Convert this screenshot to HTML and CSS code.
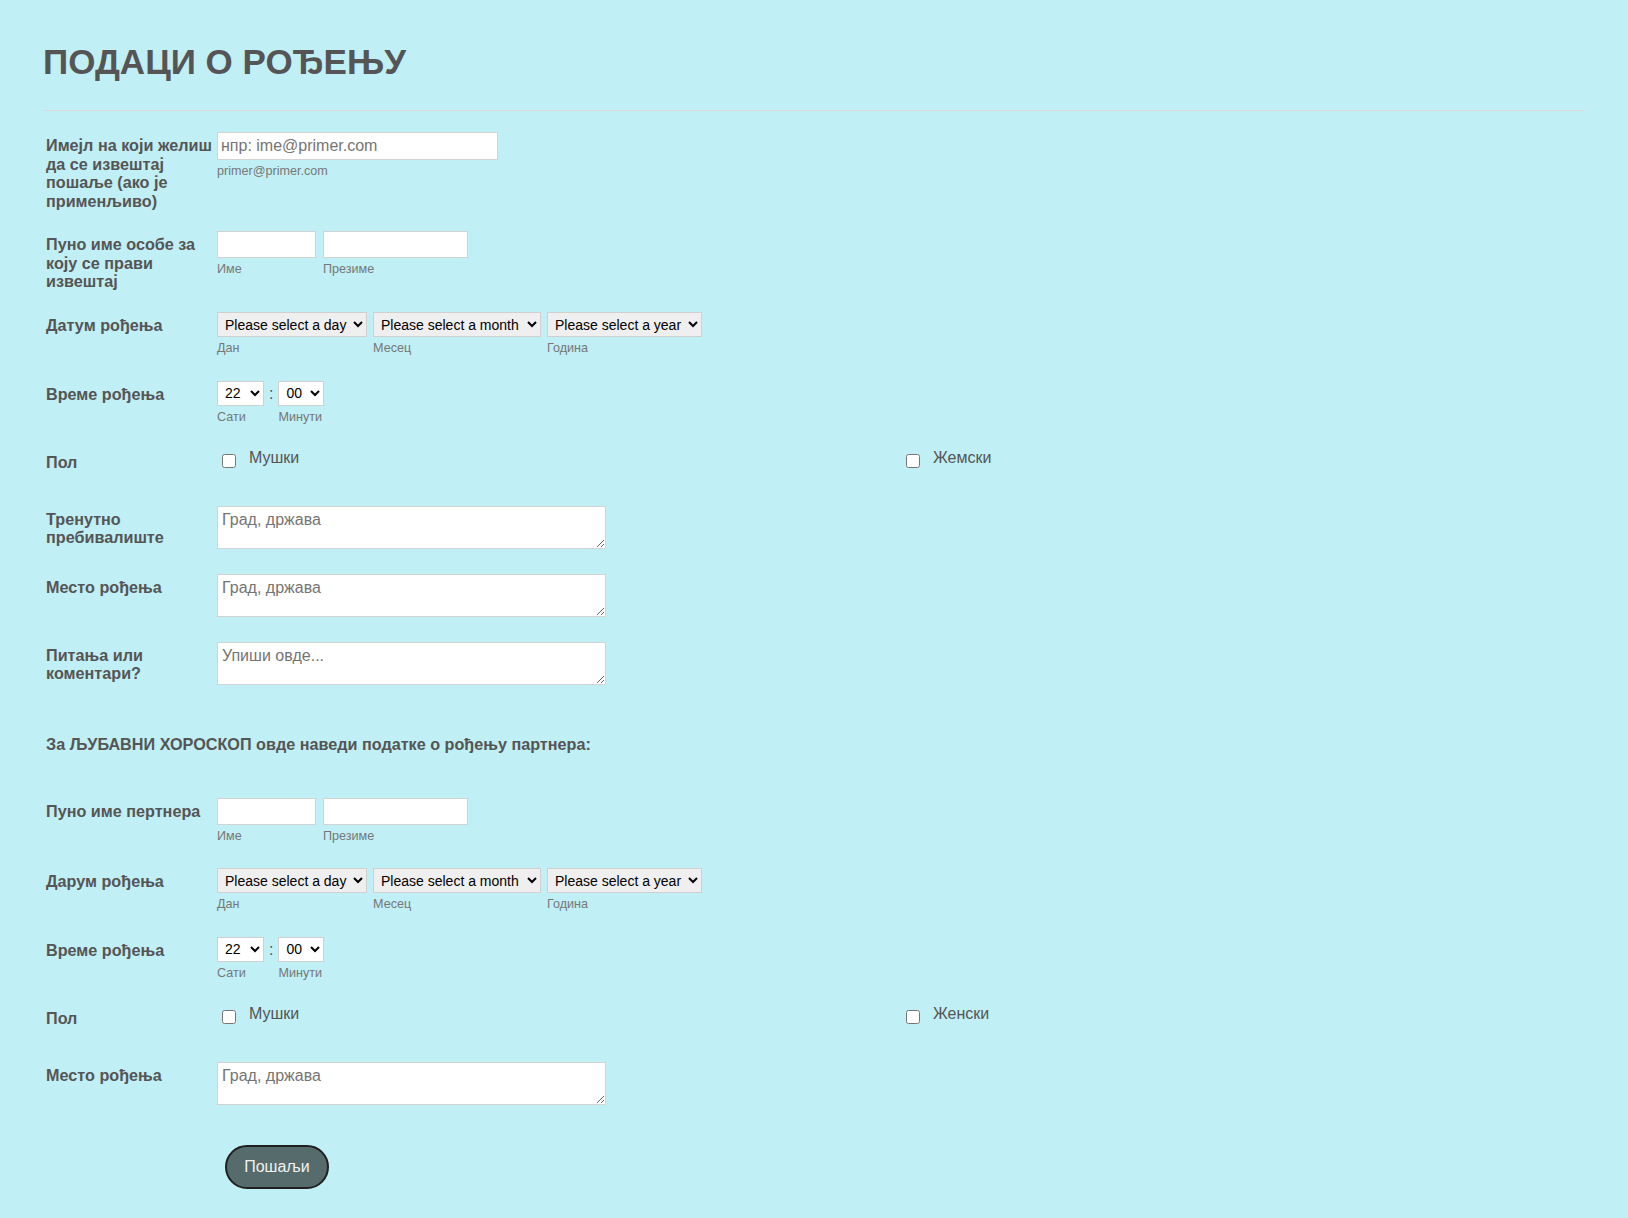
FILE: index.html
```html
<!DOCTYPE html>
<html lang="sr">
<head>
    <meta charset="utf-8">
    <title>Подаци о рођењу</title>
    <link rel="stylesheet" href="styles.css">
</head>
<body>
<form class="form-all" action="#" method="post">
    <h1 class="form-header">ПОДАЦИ О РОЂЕЊУ</h1>
    <hr class="form-divider">

    <ul class="form-section">
        <li class="form-line">
            <label class="form-label" for="email">Имејл на који желиш да се извештај пошаље (ако је применљиво)</label>
            <div class="form-input">
                <span class="form-sub">
                    <input class="field field-email" id="email" type="email" placeholder="нпр: ime@primer.com">
                    <span class="sublabel">primer@primer.com</span>
                </span>
            </div>
        </li>

        <li class="form-line">
            <label class="form-label" for="first">Пуно име особе за коју се прави извештај</label>
            <div class="form-input group group-name">
                <span class="form-sub">
                    <input class="field field-first" id="first" type="text">
                    <span class="sublabel">Име</span>
                </span>
                <span class="form-sub">
                    <input class="field field-last" id="last" type="text">
                    <span class="sublabel">Презиме</span>
                </span>
            </div>
        </li>

        <li class="form-line">
            <label class="form-label" for="day">Датум рођења</label>
            <div class="form-input group group-date">
                <span class="form-sub">
                    <select class="dropdown sel-day" id="day">
                        <option>Please select a day</option>
                        <option>1</option><option>2</option><option>3</option>
                    </select>
                    <span class="sublabel">Дан</span>
                </span>
                <span class="form-sub">
                    <select class="dropdown sel-month">
                        <option>Please select a month</option>
                        <option>Јануар</option><option>Фебруар</option><option>Март</option>
                    </select>
                    <span class="sublabel">Месец</span>
                </span>
                <span class="form-sub">
                    <select class="dropdown sel-year">
                        <option>Please select a year</option>
                        <option>2000</option><option>1999</option><option>1998</option>
                    </select>
                    <span class="sublabel">Година</span>
                </span>
            </div>
        </li>

        <li class="form-line">
            <label class="form-label" for="hour">Време рођења</label>
            <div class="form-input group group-time">
                <span class="form-sub">
                    <select class="dropdown time sel-hour" id="hour">
                        <option>20</option><option>21</option><option selected>22</option><option>23</option>
                    </select>
                    <span class="sublabel">Сати</span>
                </span>
                <span class="colon">:</span>
                <span class="form-sub">
                    <select class="dropdown time sel-min">
                        <option selected>00</option><option>15</option><option>30</option><option>45</option>
                    </select>
                    <span class="sublabel">Минути</span>
                </span>
            </div>
        </li>

        <li class="form-line">
            <label class="form-label">Пол</label>
            <div class="form-input options">
                <label class="option"><input type="checkbox" name="pol" value="m"><span>Мушки</span></label>
                <label class="option"><input type="checkbox" name="pol" value="z"><span>Жемски</span></label>
            </div>
        </li>

        <li class="form-line">
            <label class="form-label" for="home">Тренутно пребивалиште</label>
            <div class="form-input">
                <textarea class="field area" id="home" placeholder="Град, држава"></textarea>
            </div>
        </li>

        <li class="form-line">
            <label class="form-label" for="place">Место рођења</label>
            <div class="form-input">
                <textarea class="field area" id="place" placeholder="Град, држава"></textarea>
            </div>
        </li>

        <li class="form-line">
            <label class="form-label" for="notes">Питања или коментари?</label>
            <div class="form-input">
                <textarea class="field area" id="notes" placeholder="Упиши овде..."></textarea>
            </div>
        </li>

        <li class="form-line form-text">
            За ЉУБАВНИ ХОРОСКОП овде наведи податке о рођењу партнера:
        </li>

        <li class="form-line">
            <label class="form-label" for="p-first">Пуно име пертнера</label>
            <div class="form-input group group-name">
                <span class="form-sub">
                    <input class="field field-first" id="p-first" type="text">
                    <span class="sublabel">Име</span>
                </span>
                <span class="form-sub">
                    <input class="field field-last" type="text">
                    <span class="sublabel">Презиме</span>
                </span>
            </div>
        </li>

        <li class="form-line">
            <label class="form-label" for="p-day">Дарум рођења</label>
            <div class="form-input group group-date">
                <span class="form-sub">
                    <select class="dropdown sel-day" id="p-day">
                        <option>Please select a day</option>
                        <option>1</option><option>2</option><option>3</option>
                    </select>
                    <span class="sublabel">Дан</span>
                </span>
                <span class="form-sub">
                    <select class="dropdown sel-month">
                        <option>Please select a month</option>
                        <option>Јануар</option><option>Фебруар</option><option>Март</option>
                    </select>
                    <span class="sublabel">Месец</span>
                </span>
                <span class="form-sub">
                    <select class="dropdown sel-year">
                        <option>Please select a year</option>
                        <option>2000</option><option>1999</option><option>1998</option>
                    </select>
                    <span class="sublabel">Година</span>
                </span>
            </div>
        </li>

        <li class="form-line">
            <label class="form-label" for="p-hour">Време рођења</label>
            <div class="form-input group group-time">
                <span class="form-sub">
                    <select class="dropdown time sel-hour" id="p-hour">
                        <option>20</option><option>21</option><option selected>22</option><option>23</option>
                    </select>
                    <span class="sublabel">Сати</span>
                </span>
                <span class="colon">:</span>
                <span class="form-sub">
                    <select class="dropdown time sel-min">
                        <option selected>00</option><option>15</option><option>30</option><option>45</option>
                    </select>
                    <span class="sublabel">Минути</span>
                </span>
            </div>
        </li>

        <li class="form-line">
            <label class="form-label">Пол</label>
            <div class="form-input options">
                <label class="option"><input type="checkbox" name="p-pol" value="m"><span>Мушки</span></label>
                <label class="option"><input type="checkbox" name="p-pol" value="z"><span>Женски</span></label>
            </div>
        </li>

        <li class="form-line">
            <label class="form-label" for="p-place">Место рођења</label>
            <div class="form-input">
                <textarea class="field area" id="p-place" placeholder="Град, држава"></textarea>
            </div>
        </li>
    </ul>

    <div class="form-buttons">
        <button class="submit" type="submit">Пошаљи</button>
    </div>
</form>
</body>
</html>
```

FILE: styles.css
```css
html {
    background: #c0eff5;
}
body {
    margin: 0;
    font-family: "Liberation Sans", Arial, sans-serif;
    color: #555;
}
.form-all {
    padding: 42px 43px 29px 43px;
}
.form-header {
    margin: 0 0 28px;
    font-size: 35px;
    line-height: 40px;
    font-weight: bold;
    color: #555;
}
.form-divider {
    margin: 0;
    border: 0;
    border-top: 1px solid #d9d9d9;
}

.form-section {
    list-style: none;
    margin: 0;
    padding: 21.3px 0 0;
    display: flex;
    flex-direction: column;
    gap: 21.5px;
}
.form-line {
    display: flex;
    align-items: flex-start;
}
.form-label {
    flex-shrink: 0;
    width: 171px;
    padding: 4px 0 0 3px;
    font-size: 16.2px;
    line-height: 18.4px;
    font-weight: bold;
    color: #555;
}
.form-input {
    flex: 1;
}
.form-text {
    padding: 25px 0 23px 3px;
    font-size: 16.2px;
    line-height: 18.4px;
    font-weight: bold;
}

.group {
    display: flex;
    align-items: flex-start;
}
.group-name {
    gap: 7px;
}
.group-date {
    gap: 6px;
}
.form-sub {
    display: flex;
    flex-direction: column;
}
.sublabel {
    display: block;
    margin-top: 3px;
    padding-bottom: 3px;
    font-size: 12.6px;
    line-height: 16px;
    color: #777;
}

.field {
    box-sizing: border-box;
    margin: 0;
    border: 1px solid #d3d3d3;
    background: #fff;
    font-family: "Liberation Sans", Arial, sans-serif;
    font-size: 16px;
    color: #555;
    border-radius: 0;
    outline: none;
}
.field::placeholder {
    color: #757575;
}
.field-email {
    width: 281px;
    height: 28px;
    padding: 0 3px;
}
.field-first {
    width: 99px;
    height: 27px;
}
.field-last {
    width: 145px;
    height: 27px;
}
.area {
    display: block;
    width: 389px;
    height: 43px;
    margin-bottom: 3.5px;
    padding: 4px 4px;
    line-height: 18.4px;
}

.dropdown {
    box-sizing: border-box;
    height: 25px;
    margin: 0;
    padding: 0 0 0 3px;
    border: 1px solid #d0d0d0;
    border-radius: 0;
    background-color: #efefef;
    font-family: "Liberation Sans", Arial, sans-serif;
    font-size: 14px;
    color: #000;
}
.sel-day {
    width: 150px;
}
.sel-month {
    width: 168px;
}
.sel-year {
    width: 155px;
}
.time {
    background-color: #fff;
}
.sel-hour {
    width: 47px;
}
.sel-min {
    width: 46px;
}
.colon {
    padding: 0 5px;
    font-size: 16px;
    line-height: 25px;
    color: #555;
}

.options {
    display: flex;
    min-height: 35.4px;
}
.option {
    width: 50%;
    display: flex;
    align-items: flex-start;
    font-size: 16px;
    line-height: 18.4px;
    color: #555;
}
.option input {
    width: 14px;
    height: 14px;
    margin: 5px 13px 0 5px;
}

.form-buttons {
    padding: 36.4px 0 0 182px;
}
.submit {
    box-sizing: border-box;
    width: 104px;
    height: 44px;
    border: 2px solid #1f1f1f;
    border-radius: 22px;
    background: #566b6b;
    color: #f2f2f2;
    font-family: "Liberation Sans", Arial, sans-serif;
    font-size: 16px;
    cursor: pointer;
}
```
